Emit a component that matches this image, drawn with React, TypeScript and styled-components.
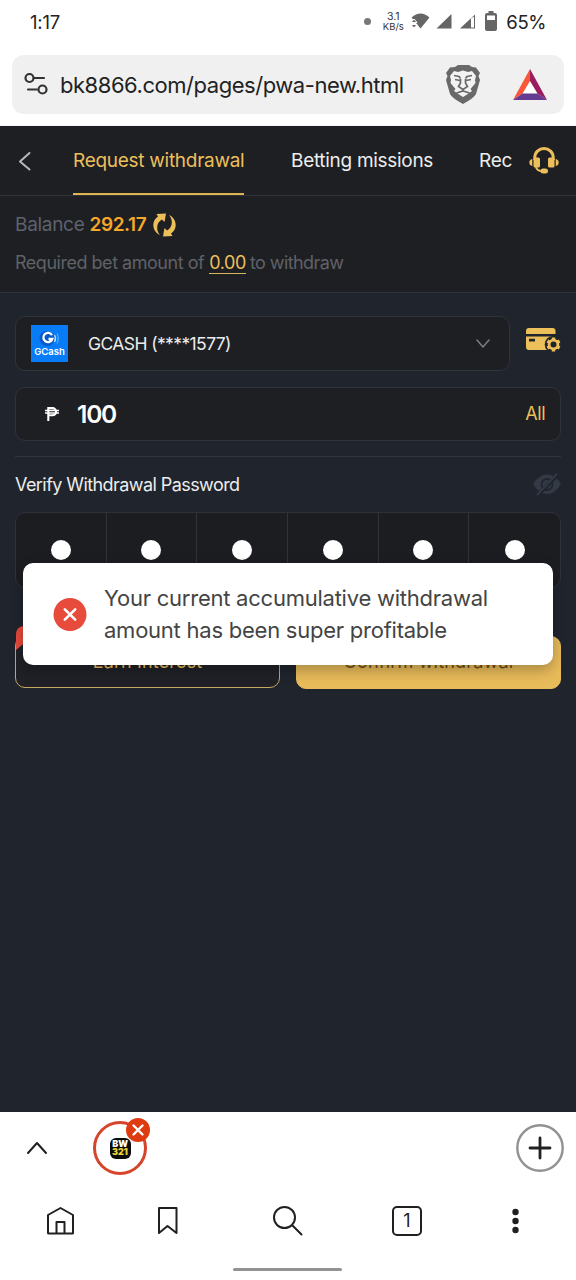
import React from 'react';
import styled, { createGlobalStyle } from 'styled-components';

const Global = createGlobalStyle`
  * { box-sizing: border-box; }
  body { margin: 0; background: #fff; font-family: Inter, "Liberation Sans", sans-serif; }
  svg { display: block; flex: none; }
`;

const Screen = styled.div`
  width: 576px; height: 1280px; display: flex; flex-direction: column;
  background: #fff; overflow: hidden;
`;

const Txt = styled.span<{ $size: number; $track?: number; $color?: string; $weight?: number; $lh?: number }>`
  font-size: ${p => p.$size}px;
  letter-spacing: ${p => p.$track ?? 0}px;
  color: ${p => p.$color ?? '#eceded'};
  font-weight: ${p => p.$weight ?? 400};
  line-height: ${p => p.$lh ?? 24}px;
  white-space: nowrap;
`;

/* status bar */
const StatusBar = styled.header`
  height: 43px; flex: none; display: flex; align-items: center;
  justify-content: space-between; padding: 0 30px 0 30px;
`;
const StatusRight = styled.div`display: flex; align-items: center;`;
const Dot = styled.i`width: 7px; height: 7px; border-radius: 50%; background: #777; margin-right: 11px;`;
const Speed = styled.div`
  width: 22px; margin-right: 7px; display: flex; flex-direction: column; align-items: center;
  color: #333; font-size: 9.5px; line-height: 10px; white-space: nowrap;
`;

/* address bar */
const AddressWrap = styled.div`height: 83px; flex: none; padding: 12px 12px 0; border-bottom: 1px solid #f4f4f4;`;
const Address = styled.div`
  height: 59px; border-radius: 12px; background: #f0f0f0; display: flex; align-items: center;
  padding: 0 17px 0 11px;
`;
const Url = styled.div`flex: 1; margin-left: 11px; display: flex;`;

/* page */
const Page = styled.main`
  height: 986px; flex: none; background: #20242d; display: flex; flex-direction: column; position: relative;
`;
const Tabs = styled.nav`
  height: 70px; flex: none; background: #1e1f23; border-bottom: 1px solid #30343b; display: flex;
  padding: 0 17px 0 16px;
`;
const TabIcon = styled.div<{ $w: number; $up?: number }>`
  width: ${p => p.$w}px; display: flex; align-items: center; flex: none; padding-bottom: ${p => p.$up ?? 0}px;
`;
const Tab = styled.div<{ $w: number; $active?: boolean; $clip?: boolean }>`
  width: ${p => p.$w}px; height: 69px; padding-top: 23px; display: flex; flex: none;
  overflow: ${p => (p.$clip ? 'hidden' : 'visible')};
  border-bottom: 2px solid ${p => (p.$active ? '#dfb552' : 'transparent')};
`;
const Gap = styled.div<{ $w: number }>`width: ${p => p.$w}px; flex: none;`;
const Balance = styled.section`
  height: 97px; flex: none; background: #1e1f23; border-bottom: 1px solid #2d333d; padding: 16px 15px 0;
  display: flex; flex-direction: column; gap: 13px;
`;
const Line = styled.div`display: flex; align-items: center; height: 25px;`;
const Underlined = styled.span`border-bottom: 1px solid #d9b45f; height: 22px; display: flex; margin: 0 4px 0 5px; line-height: 21px;`;

const Form = styled.section`padding: 23px 15px 0; display: flex; flex-direction: column;`;
const Row = styled.div`display: flex;`;
const AmountRow = styled.div`display: flex; margin-top: 16px;`;
const Field = styled.div<{ $w: number; $h: number }>`
  width: ${p => p.$w}px; height: ${p => p.$h}px; border: 1px solid #2e343b; border-radius: 10px; flex: none;
  background: #1e1f23; display: flex; align-items: center; padding: 0 15px;
`;
const Grow = styled.div`flex: 1;`;
const Bank = styled.div`
  width: 37px; height: 37px; background: #087bf6; display: flex; flex-direction: column; align-items: center;
  margin-right: 20px; padding-top: 5px;
`;
const Divider = styled.div`height: 1px; background: #30363e; margin-top: 15px;`;
const LabelRow = styled.div`height: 55px; display: flex; justify-content: space-between; align-items: center;`;
const Pins = styled.div`
  height: 76px; display: grid; grid-template-columns: repeat(6, 1fr); border: 1px solid #2e3238;
  border-radius: 10px; background: #1c1d21;
`;
const Pin = styled.div`
  display: flex; justify-content: center; align-items: center;
  &:not(:last-child) { border-right: 1px solid #303237; }
  &::after { content: ''; width: 20px; height: 20px; border-radius: 50%; background: #fff; }
`;
const Actions = styled.div`display: flex; gap: 16px; margin-top: 48px; position: relative;`;
const Button = styled.div<{ $primary?: boolean }>`
  flex: 1; height: ${p => (p.$primary ? 53 : 52)}px; border-radius: 10px; display: flex; align-items: center; justify-content: center;
  border: 1px solid ${p => (p.$primary ? '#e8bb5a' : '#c4a760')};
  background: ${p => (p.$primary ? '#e8bb5a' : '#1f2127')};
  padding-bottom: ${p => (p.$primary ? 1 : 0)}px;
`;
const Ribbon = styled.div`
  position: absolute; left: 1px; top: -10px; width: 60px; height: 24px; background: #e54a3c;
  border-radius: 8px 8px 8px 0; clip-path: polygon(0 0, 100% 0, 100% 75%, 12% 75%, 0 100%);
`;
const Toast = styled.div`
  position: absolute; left: 23px; top: 437px; width: 530px; height: 102px; border-radius: 10px;
  background: #fff; box-shadow: 0 5px 14px rgba(0,0,0,.28); display: flex; align-items: center; padding-left: 30px; gap: 17px;
`;
const ToastText = styled.div`display: flex; flex-direction: column;`;

/* browser bottom */
const GroupBar = styled.div`
  height: 72px; flex: none; display: flex; align-items: center; padding: 0 12px 0 26px;
`;
const Site = styled.div`
  position: relative; width: 54px; height: 54px; margin-left: 45px; border: 3px solid #d5452b; border-radius: 50%;
  display: flex; align-items: center; justify-content: center;
`;
const SiteLogo = styled.div`
  width: 21px; height: 21px; border-radius: 6px; background: #0b0b0b; color: #fff; display: flex; flex-direction: column;
  align-items: center; justify-content: center; font-size: 9px; line-height: 8px; font-weight: 900;
  b { color: #ecd234; font-weight: 900; }
`;
const CloseBadge = styled.div`position: absolute; left: 30px; top: -6px;`;
const Nav = styled.nav`
  height: 73px; flex: none; display: flex; align-items: center; padding: 0 0 0 43px;
`;
const NavItem = styled.div<{ $ml?: number }>`margin-left: ${p => p.$ml ?? 0}px;`;
const TabCount = styled.div`
  width: 30px; height: 30px; border: 2px solid #202020; border-radius: 5px; display: flex; align-items: center; justify-content: center;
`;
const Home = styled.div`height: 3px; width: 109px; margin: 11px auto 0 233px; background: #929292; border-radius: 2px;`;

const Gold = '#ecbf5b';

const StatusIcons = () => (
  <svg width="92" height="24" viewBox="411.5 10 92 24" fill="#666">
    <path d="M412 17.5Q421 9.5 430 17.5L421 28.5Z" />
    <path d="M411.5 22.5L414.5 19L417.5 22.5ZM411.5 24.5H417.5L414.5 28Z" stroke="#fff" strokeWidth="1" />
    <path d="M452 14V28.5H437Z" />
    <path fillRule="evenodd" d="M475.5 14.5V28.5H460.5ZM471.5 18.5V27.5H474.500V16.500Z" />
    <path fillRule="evenodd" d="M489 11h5v2h1.5q2 0 2 2v14q0 2-2 2h-8q-2 0-2-2V15q0-2 2-2h1.5ZM487.5 15.5v4.5h8v-4.5Z" />
  </svg>
);

const Tune = () => (
  <svg width="26" height="26" viewBox="23 72 26 26" fill="none" stroke="#333" strokeWidth="2.2" strokeLinecap="round">
    <circle cx="29.5" cy="78" r="4" /><path d="M34 78h10M28 89.5h9" /><circle cx="42.5" cy="89.5" r="4" />
  </svg>
);

const Lion = () => (
  <svg width="34" height="39" viewBox="0 0 34 39">
    <path fill="#696969" d="M9 2L12 0H23L26 2L30 2.5L34 8L32.5 11L34 15L30 29Q28 33 17 39Q6 33 4 29L0 15L1.5 11L0 8L4 2.5Z" />
    <path fill="#f3f3f3" d="M8 6L12 7L17 5.5L22 7L26 6L30 11L29 15L29.5 18L24.5 24L26 26L21 29.5L17 32L13 29.5L8 26L9.5 24L4.5 18L5 15L4 11Z" />
    <path d="M8 10.500L13 11.500L14.500 13.500M26 10.500L21 11.500L19.500 13.500M9 14.500L14 15.500M25 14.500L20 15.500M14.500 14V18L12.500 21.500L17 24.500L21.500 21.500L19.500 18V14M17 24.500V26.500M10.500 28L17 26L23.500 28" fill="none" stroke="#696969" strokeWidth="1.700" />
  </svg>
);

const Triangle = () => (
  <svg width="34" height="31" viewBox="0 0 34 31">
    <path fill="#fff" d="M17 12L25 25H9Z" />
    <path fill="#fa5638" d="M17 0V12L9.5 24.5L0 31Z" />
    <path fill="#9c1c60" d="M17 0L34 31L24.5 24.5L17 12Z" />
    <path fill="#653a91" d="M0 31L9.5 24.5H24.5L34 31Z" />
  </svg>
);

const Refresh = () => (
  <svg width="23" height="24" viewBox="0 0 23 24" fill={Gold}>
    <path d="M7 22C-1 18.500 -2 8 5 3.500L3.500 1L13 0.500L11.500 9L9 6.500C3.500 9 2.500 17 7 22Z" />
    <path d="M16 2C24 5.500 25 16 18 20.500L19.500 23L10 23.500L11.500 15L14 17.500C19.500 15 20.500 7 16 2Z" />
  </svg>
);

const Headset = () => (
  <svg width="30" height="28" viewBox="0 0 30 28">
    <path d="M5.8 13V10.500A9.200 9 0 0 1 24.200 10.500V13" fill="none" stroke={Gold} strokeWidth="3" />
    <rect x="4.500" y="10.500" width="6.500" height="10" rx="1.6" fill={Gold} />
    <rect x="19" y="10.500" width="6.500" height="10" rx="1.6" fill={Gold} />
    <path d="M3.300 12v7Q0.300 18.500 0.300 15.500T3.300 12ZM26.700 12v7Q29.700 18.500 29.700 15.500T26.700 12Z" fill={Gold} />
    <path d="M7 20Q8 24 13 24" fill="none" stroke={Gold} strokeWidth="2" />
    <rect x="11.5" y="21.5" width="7.5" height="5" rx="2.5" fill={Gold} />
  </svg>
);

const CardGear = () => (
  <svg width="35" height="25" viewBox="0.5 0 35 25">
    <path fill={Gold} d="M3.5 0H27Q30 0 30 3V6H0.5V3Q0.5 0 3.5 0Z" />
    <path fill={Gold} fillRule="evenodd" d="M0.5 8.5H30V22H3.5Q0.5 22 0.5 19ZM3.5 10.800H9.500V13.500H3.5Z" />
    <circle cx="28" cy="16.5" r="8.8" fill="#20242d" />
    <circle cx="28" cy="16.5" r="4.4" fill="none" stroke={Gold} strokeWidth="2.8" />
    <path d="M28 11.500V9.500M28 23.500V21.500M32.300 14L34.100 13M21.900 13L23.700 14M21.900 20L23.700 19M32.300 19L34.100 20" stroke={Gold} strokeWidth="3.4" />
  </svg>
);

const EyeOff = () => (
  <svg width="28" height="23" viewBox="0 0 28 23">
    <path fill="#343946" d="M0 11Q6 1.5 14 1.5T28 11Q22 21 14 21T0 11Z" />
    <circle cx="14" cy="11.5" r="5.5" fill="none" stroke="#20242d" strokeWidth="1.8" />
    <path d="M5 22L25 1" stroke="#20242d" strokeWidth="4" /><path d="M4 22L24 0.5" stroke="#343946" strokeWidth="2" />
  </svg>
);

const GMark = () => (
  <svg width="24" height="17" viewBox="0 0 24 17" fill="none">
    <circle cx="9" cy="8.5" r="7.5" fill="#0759c6" />
    <path d="M14 5.2A4.6 4.6 0 1 0 14.3 9H10.5" stroke="#fff" strokeWidth="2.3" />
    <path d="M16.5 5Q18.5 8.5 16.5 12" stroke="#bfe0ff" strokeWidth="1.3" /><path d="M19 3.5Q21.5 8.5 19 13.5" stroke="#55aaff" strokeWidth="1.2" />
  </svg>
);

const Peso = () => (
  <svg width="14" height="14" viewBox="0 0 14 14" fill="none" stroke="#fff">
    <path d="M3.3 14V1.1H7.5A3.6 3.6 0 0 1 7.5 8.3H3.5" strokeWidth="2.1" /><path d="M0 3.5H14M0 6H14" strokeWidth="1.3" />
  </svg>
);

const ErrorIcon = () => (
  <svg width="34" height="34" viewBox="0 0 34 34">
    <circle cx="17" cy="17.5" r="16.5" fill="#e64b3c" /><path d="M11.8 12.3L22.2 22.7M22.2 12.3L11.8 22.7" stroke="#fff" strokeWidth="2.6" strokeLinecap="round" />
  </svg>
);

const Stroke = ({ w, h, d, sw = 2, color = '#202020' }: { w: number; h: number; d: string; sw?: number; color?: string }) => (
  <svg width={w} height={h} viewBox={`0 0 ${w} ${h}`} fill="none" stroke={color} strokeWidth={sw} strokeLinecap="round" strokeLinejoin="round"><path d={d} /></svg>
);

export default function App() {
  return (
    <Screen>
      <Global />
      <StatusBar>
        <Txt $size={18.5} $track={-0.2} $color="#222">1:17</Txt>
        <StatusRight>
          <Dot />
          <Speed><Txt $size={10.5} $lh={10} $color="#333">3.1</Txt><span>KB/s</span></Speed>
          <StatusIcons />
          <Gap $w={3} />
          <Txt $size={18.5} $track={-0.4} $color="#222">65%</Txt>
        </StatusRight>
      </StatusBar>
      <AddressWrap>
        <Address>
          <Tune />
          <Url><Txt $size={22} $track={-0.46} $color="#222" $lh={30}>bk8866.com/pages/pwa-new.html</Txt></Url>
          <Lion />
          <Gap $w={33} />
          <Triangle />
        </Address>
      </AddressWrap>

      <Page>
        <Tabs>
          <TabIcon $w={57}><Stroke w={16} h={20} d="M13.5 2L4 10.5L13.5 18.5" color="#b4b7bc" /></TabIcon>
          <Tab $w={171} $active><Txt $size={19} $track={-0.28} $color={Gold}>Request withdrawal</Txt></Tab>
          <Gap $w={47} />
          <Tab $w={143}><Txt $size={19} $track={-0.3}>Betting missions</Txt></Tab>
          <Gap $w={45} />
          <Tab $w={33} $clip><Txt $size={19} $track={-0.3}>Records</Txt></Tab>
          <Gap $w={17} />
          <TabIcon $w={30}><Headset /></TabIcon>
        </Tabs>
        <Balance>
          <Line>
            <Txt $size={19} $track={-0.3} $color="#5d626e">Balance</Txt>
            <Gap $w={5} />
            <Txt $size={19} $track={-0.4} $weight={600} $color="#f5a829">292.17</Txt>
            <Gap $w={7} />
            <Refresh />
          </Line>
          <Line>
            <Txt $size={18} $track={-0.48} $color="#5f6267">Required bet amount of</Txt>
            <Underlined><Txt $size={18} $track={-0.4} $lh={21} $color={Gold}>0.00</Txt></Underlined>
            <Txt $size={18} $track={-0.58} $color="#5f6267">to withdraw</Txt>
          </Line>
        </Balance>
        <Form>
          <Row>
            <Field $w={495} $h={55}>
              <Bank><GMark /><Txt $size={9.5} $lh={10} $weight={600} $color="#fff">GCash</Txt></Bank>
              <Txt $size={17.5} $track={-0.6}>GCASH (****1577)</Txt>
              <Grow />
              <Stroke w={23} h={12} d="M6 2L12 9L18 2" sw={1.6} color="#777a80" />
            </Field>
            <Gap $w={16} />
            <TabIcon $w={35} $up={6}><CardGear /></TabIcon>
          </Row>
          <AmountRow>
            <Field $w={546} $h={54}>
              <Gap $w={14} />
              <Peso />
              <Gap $w={18} />
              <Txt $size={24.5} $track={-1.2} $weight={600} $color="#fff" $lh={30}>100</Txt>
              <Grow />
              <Txt $size={18} $track={-0.5} $color={Gold}>All</Txt>
            </Field>
          </AmountRow>
          <Divider />
          <LabelRow><Txt $size={18} $track={-0.57}>Verify Withdrawal Password</Txt><EyeOff /></LabelRow>
          <Pins>{Array.from({ length: 6 }, (_, i) => <Pin key={i} />)}</Pins>
          <Actions>
            <Button><Txt $size={18} $track={0.15} $color={Gold}>Earn Interest</Txt></Button>
            <Button $primary><Txt $size={18} $track={0.2} $color="#6b4e17">Confirm withdrawal</Txt></Button>
            <Ribbon />
          </Actions>
        </Form>
        <Toast>
          <ErrorIcon />
          <ToastText>
            <Txt $size={22} $track={-0.24} $lh={32} $color="#444">Your current accumulative withdrawal</Txt>
            <Txt $size={22} $track={-0.24} $lh={32} $color="#444">amount has been super profitable</Txt>
          </ToastText>
        </Toast>
      </Page>

      <GroupBar>
        <Stroke w={22} h={14} d="M2 12L11 2L20 12" />
        <Site>
          <SiteLogo><span>BW</span><b>321</b></SiteLogo>
          <CloseBadge>
            <svg width="24" height="24" viewBox="0 0 24 24"><circle cx="12" cy="12" r="12" fill="#df3b13" /><path d="M7.5 7.5L16.5 16.5M16.5 7.5L7.5 16.5" stroke="#fff" strokeWidth="2.4" strokeLinecap="round" /></svg>
          </CloseBadge>
        </Site>
        <Grow />
        <svg width="48" height="48" viewBox="0 0 48 48"><circle cx="24" cy="24" r="22.7" fill="none" stroke="#929292" strokeWidth="2.4" /><path d="M24 14V34M14 24H34" stroke="#222" strokeWidth="2.8" strokeLinecap="round" /></svg>
      </GroupBar>
      <Nav>
        <NavItem $ml={3}><Stroke w={29} h={29} d="M14.5 2L27 9V27Q27 27.5 26.5 27.5H2.5Q2 27.5 2 27V9ZM10.5 27V16H18.5V27" /></NavItem>
        <NavItem $ml={82}><Stroke w={21} h={29} d="M2 2H19.5V27L10.5 20L2 27Z" /></NavItem>
        <NavItem $ml={94}><Stroke w={32} h={32} d="M23 12.5A10.5 10.5 0 1 1 2 12.5A10.5 10.5 0 0 1 23 12.5M20 20L29.5 29.5" /></NavItem>
        <NavItem $ml={88}><TabCount><Txt $size={18} $color="#202020">1</Txt></TabCount></NavItem>
        <NavItem $ml={90}><svg width="8" height="26" viewBox="0 0 8 26" fill="#202020"><circle cx="3.5" cy="4" r="3.2" /><circle cx="3.5" cy="13" r="3.2" /><circle cx="3.5" cy="22" r="3.2" /></svg></NavItem>
      </Nav>
      <Home />
    </Screen>
  );
}
